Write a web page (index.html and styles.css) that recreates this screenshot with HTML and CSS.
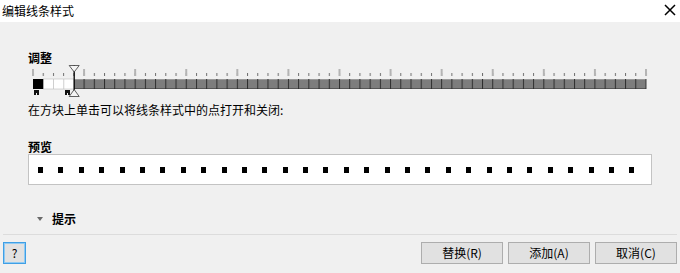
FILE: index.html
```html
<!DOCTYPE html>
<html lang="zh-CN">
<head>
<meta charset="utf-8">
<title>编辑线条样式</title>
<link rel="stylesheet" href="styles.css">
</head>
<body>
<div class="window">
  <div class="titlebar">
    <span class="title">编辑线条样式</span>
    <svg class="close" width="12" height="12" viewBox="0 0 12 12"><path d="M1 1L11 11M11 1L1 11" stroke="#000" stroke-width="1.5" fill="none"/></svg>
  </div>
  <div class="content">
    <div class="section-label adjust">调整</div>
    <svg class="ruler" width="624" height="33" viewBox="0 0 624 33">
      <defs>
        <pattern id="smallTicks" patternUnits="userSpaceOnUse" x="4.5" y="0" width="10.2167" height="33">
          <rect x="0" y="8" width="1" height="3" fill="#6e6e6e"/>
        </pattern>
        <pattern id="bigTicks" patternUnits="userSpaceOnUse" x="4" y="0" width="51.0833" height="33">
          <rect x="0" y="4" width="2" height="7" fill="#b4b4b4"/>
        </pattern>
        <pattern id="dividers" patternUnits="userSpaceOnUse" x="4.5" y="0" width="10.2167" height="33">
          <rect x="0" y="14" width="1" height="10" fill="#2e2e2e"/>
        </pattern>
      </defs>
      <rect x="4" y="0" width="616" height="33" fill="url(#smallTicks)"/>
      <rect x="3.5" y="0" width="617" height="33" fill="url(#bigTicks)"/>
      <rect x="45.87" y="14" width="572.13" height="10" fill="#7d7d7d"/>
      <rect x="45.87" y="14" width="572.13" height="1" fill="#9a9a9a"/>
      <rect x="45.87" y="23" width="572.13" height="1" fill="#555"/>
      <rect x="50" y="0" width="569" height="33" fill="url(#dividers)"/>
      <rect x="15.22" y="14" width="30.65" height="10" fill="#fff"/>
      <rect x="15.22" y="14" width="30.65" height="10" fill="none" stroke="#bdbdbd" stroke-width="0.6"/>
      <rect x="25.2" y="14" width="0.8" height="10" fill="#c4c4c4"/>
      <rect x="35.4" y="14" width="0.8" height="10" fill="#c4c4c4"/>
      <rect x="5" y="14" width="10.22" height="10" fill="#000"/>
      <rect x="6" y="25" width="5" height="3" fill="#111"/>
      <rect x="6" y="27" width="2" height="3" fill="#111"/>
      <rect x="9" y="27" width="2" height="3" fill="#111"/>
      <rect x="37" y="25" width="5" height="3" fill="#111"/>
      <rect x="37" y="27" width="2" height="3" fill="#111"/>
      <rect x="40" y="27" width="2" height="3" fill="#111"/>
      <line x1="46.2" y1="0" x2="46.2" y2="31" stroke="#000" stroke-width="1.3"/>
      <path d="M41.2 0.5H51.2L46.2 7Z" fill="#f4f4f4" stroke="#3a3a3a" stroke-width="0.8"/>
      <path d="M41.2 31.5H51.2L46.2 24.5Z" fill="#f4f4f4" stroke="#3a3a3a" stroke-width="0.8"/>
    </svg>
    <div class="hint">在方块上单击可以将线条样式中的点打开和关闭:</div>
    <div class="section-label preview-label">预览</div>
    <div class="preview">
      <span class="dot"></span><span class="dot"></span><span class="dot"></span><span class="dot"></span><span class="dot"></span>
      <span class="dot"></span><span class="dot"></span><span class="dot"></span><span class="dot"></span><span class="dot"></span>
      <span class="dot"></span><span class="dot"></span><span class="dot"></span><span class="dot"></span><span class="dot"></span>
      <span class="dot"></span><span class="dot"></span><span class="dot"></span><span class="dot"></span><span class="dot"></span>
      <span class="dot"></span><span class="dot"></span><span class="dot"></span><span class="dot"></span><span class="dot"></span>
      <span class="dot"></span><span class="dot"></span><span class="dot"></span><span class="dot"></span><span class="dot"></span>
    </div>
    <div class="tips">
      <span class="caret"></span>
      <span class="tips-text">提示</span>
    </div>
  </div>
  <div class="footer">
    <button class="help">?</button>
    <div class="actions">
      <button class="btn">替换(R)</button>
      <button class="btn">添加(A)</button>
      <button class="btn">取消(C)</button>
    </div>
  </div>
</div>
</body>
</html>
```
FILE: styles.css
```css
* { box-sizing: border-box; }
html, body {
  margin: 0;
  padding: 0;
}
body {
  width: 680px;
  height: 273px;
  overflow: hidden;
  background: #f0f0f0;
  font-family: "Noto Sans CJK SC", "Noto Sans", sans-serif;
  font-size: 12px;
  color: #000;
}
.window {
  display: flex;
  flex-direction: column;
  height: 273px;
}
.titlebar {
  height: 22px;
  background: #fff;
  display: flex;
  align-items: center;
  justify-content: space-between;
  padding: 0 4px 0 2px;
  flex: none;
}
.title {
  font-size: 12px;
  line-height: 14px;
}
.close {
  display: block;
  margin-top: -3px;
}
.content {
  padding: 0 28px;
  flex: none;
}
.section-label {
  font-weight: bold;
  line-height: 14px;
}
.adjust {
  margin-top: 29px;
}
.ruler {
  display: block;
}
.hint {
  margin-top: 4px;
  line-height: 16px;
}
.preview-label {
  margin-top: 22px;
}
.preview {
  height: 31px;
  width: 624px;
  background: #fff;
  border: 1px solid #c3c3c3;
  display: flex;
  align-items: flex-start;
  gap: 15.4px;
  padding: 12px 0 0 9px;
}
.dot {
  display: block;
  width: 5px;
  height: 6px;
  background: #000;
  flex: none;
}
.tips {
  margin-top: 27px;
  display: flex;
  align-items: center;
  height: 14px;
  padding-left: 9px;
}
.caret {
  width: 0;
  height: 0;
  border-left: 3.5px solid transparent;
  border-right: 3.5px solid transparent;
  border-top: 4px solid #6a6a6a;
  margin-right: 9px;
}
.tips-text {
  font-weight: bold;
  line-height: 14px;
}
.footer {
  margin: auto 3px 0;
  border-top: 1px solid #dcdcdc;
  padding: 7px 0 9px;
  display: flex;
  justify-content: space-between;
  align-items: center;
}
button {
  font-family: "Noto Sans CJK SC", "Noto Sans", sans-serif;
  font-size: 12px;
  color: #000;
  margin: 0;
  padding: 0;
  height: 22px;
  line-height: 20px;
}
.help {
  width: 23px;
  background: #e1e1e1;
  border: 1px solid #3f9fe5;
  box-shadow: inset 0 0 0 1px #8fcaf3;
}
.actions {
  display: flex;
  gap: 5px;
}
.btn {
  width: 82px;
  background: #e1e1e1;
  border: 1px solid #adadad;
}
```
